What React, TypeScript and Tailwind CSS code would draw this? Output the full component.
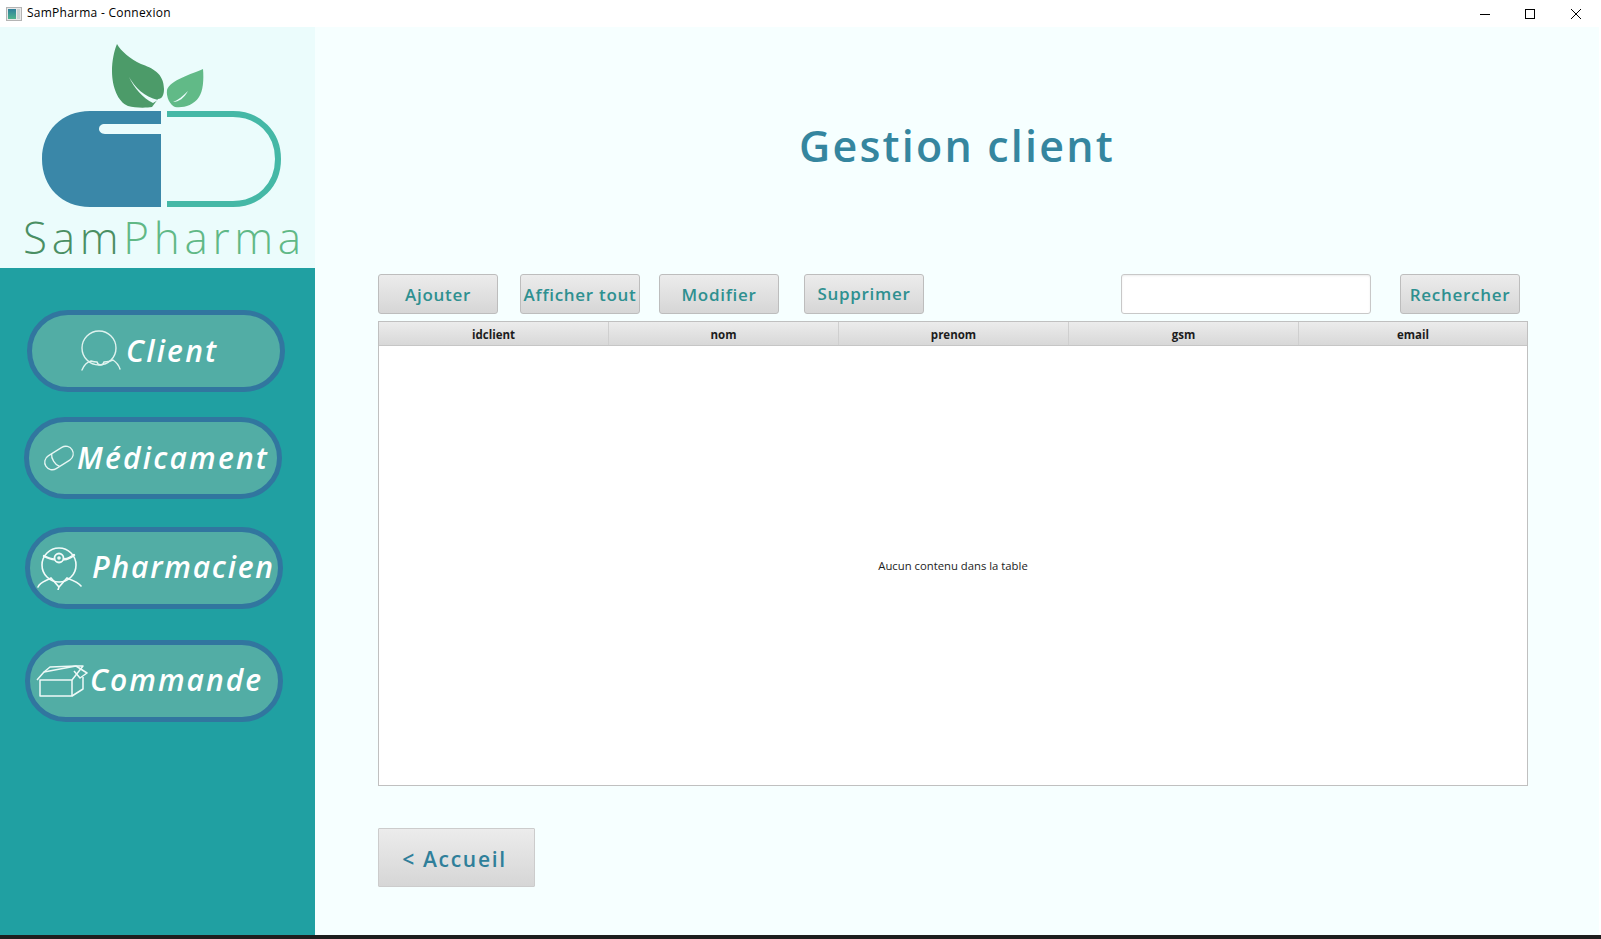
import type { ReactNode } from "react";

const FONT = "font-['Open_Sans','Liberation_Sans',sans-serif]";

function LogoMark() {
  return (
    <svg viewBox="0 0 315 186" className="block w-[315px] h-[186px]">
      <path d="M117 17 C121 24 130 32 141 37 C152 41 164 46 164 62 C164 68 162 72 158 72 L152 80 C146 81 135 81 128 79 C118 75 112 60 112 44 C112 34 114 24 117 17 Z" fill="#4c9b69" />
      <path d="M129 50 C135 60 144 70 158 73 L153 76 C143 71 134 61 129 50 Z" fill="#ebfcfc" />
      <path d="M203 42 C204 53 203 64 199 70 C193 79 183 81 175 80 C170 78 166 70 167 63 C170 53 192 47 203 42 Z" fill="#61ba87" />
      <path d="M188 64 C183 69 178 73 173 75 C179 75 184 71 188 64 Z" fill="#ebfcfc" />
      <path d="M161 84 L90 84 C62 84 42 104 42 132 C42 160 62 180 90 180 L161 180 L161 107 L105 107 C101 107 99 104 99 102 C99 99 101 97 105 97 L161 97 Z" fill="#3a87a8" />
      <path d="M167 87 L233 87 C259 87 278 106 278 132 C278 158 259 177 233 177 L167 177" fill="none" stroke="#45b8a6" strokeWidth="6" />
    </svg>
  );
}

function ClientIcon() {
  return (
    <svg viewBox="0 0 40 44" className="w-[40px] h-[44px] shrink-0" fill="none" stroke="#dff3ef" strokeWidth="1.4" strokeLinecap="round">
      <circle cx="18" cy="19" r="17" />
      <path d="M1 41 C3 36 6 33 10 32 C13 33 15 33 16 33 C17 37 22 37 23 33 C25 33 28 33 32 31 C35 33 38 37 39 40" />
    </svg>
  );
}

function PillIcon() {
  return (
    <svg viewBox="0 0 32 26" className="w-[32px] h-[26px] shrink-0" fill="none" stroke="#e6f6f3" strokeWidth="1.3">
      <g transform="rotate(-32 16 13)">
        <rect x="0.5" y="5.5" width="31" height="15" rx="7.5" />
        <path d="M12 5.5 C9 9 9 17 12 20.5" />
      </g>
    </svg>
  );
}

function PharmacienIcon() {
  return (
    <svg viewBox="0 0 45 44" className="w-[45px] h-[44px] shrink-0" fill="none" stroke="#f2fbf9" strokeWidth="1.6" strokeLinecap="round">
      <circle cx="22" cy="19" r="17" />
      <path d="M7 10 C13 13 17 14 19 13 M26 13 C29 14 33 12 37 9" strokeWidth="2.4" />
      <circle cx="22" cy="12" r="4.5" fill="#52ada5" strokeWidth="1.8" />
      <circle cx="22" cy="12" r="1" />
      <path d="M1 41 C3 36 9 35 14 32 L22 41 L30 32 C35 34 41 36 44 40 M22 41 L21 44" />
    </svg>
  );
}

function BoxIcon() {
  return (
    <svg viewBox="0 0 52 32" className="w-[52px] h-[32px] shrink-0" fill="none" stroke="#eef9f7" strokeWidth="1.5" strokeLinejoin="round">
      <path d="M4 15 L36 15 L36 31 L4 31 Z" />
      <path d="M36 31 L47 24 L47 12" />
      <path d="M1 15 L8 7 L40 1 L47 1 L36 15" />
      <path d="M8 7 L14 2 L40 1" />
      <path d="M40 1 L51 8 L44 13 L38 6" />
    </svg>
  );
}

const PILLS: { label: string; icon: ReactNode; cls: string; textCls: string }[] = [
  { label: "Client", icon: <ClientIcon />, cls: "ml-[27px] mt-[42px] pl-[49px] gap-[5px]", textCls: "-mt-[2px] tracking-[2.2px]" },
  { label: "Médicament", icon: <PillIcon />, cls: "ml-[24px] mt-[25px] pl-[14px] gap-[2px]", textCls: "-mt-[2px] tracking-[2.2px]" },
  { label: "Pharmacien", icon: <PharmacienIcon />, cls: "ml-[25px] mt-[28px] pl-[7px] gap-[10px]", textCls: "-mt-[3px] tracking-[1.8px]" },
  { label: "Commande", icon: <BoxIcon />, cls: "ml-[25px] mt-[31px] pl-[6px] gap-[2px]", textCls: "-mt-[3px] tracking-[2px]" },
];

const COLUMNS = ["idclient", "nom", "prenom", "gsm", "email"];

const BTN = "h-[40px] w-[120px] shrink-0 rounded-[3px] border border-[#bdbdbd] bg-gradient-to-b from-[#ececec] to-[#d6d6d6] pt-[1px] text-[17px] font-semibold tracking-[0.7px] text-[#2e9090] flex items-center justify-center";

export default function App() {
  return (
    <div className={`h-[939px] w-[1601px] overflow-hidden flex flex-col bg-white ${FONT}`}>
      {/* title bar */}
      <div className="h-[27px] shrink-0 flex items-center bg-white">
        <div className="ml-[6px] w-[16px] h-[14px] border border-[#b4b4b4] bg-[#e8e8e8] flex p-[1px] gap-[1px]">
          <div className="w-[8px] bg-gradient-to-b from-[#2f7f9a] to-[#4fb48c]" />
          <div className="flex-1 bg-[#c9d2d2]" />
        </div>
        <span className="ml-[5px] -mt-[1px] text-[12px] text-black tracking-[0.25px]">SamPharma - Connexion</span>
        <div className="ml-auto flex items-center mr-[20px]">
          <svg viewBox="0 0 10 10" className="w-[10px] h-[10px]" stroke="black" strokeWidth="1"><path d="M0 5.5 H10" /></svg>
          <svg viewBox="0 0 10 10" className="w-[10px] h-[10px] ml-[35px]" fill="none" stroke="black" strokeWidth="1"><rect x="0.5" y="0.5" width="9" height="9" /></svg>
          <svg viewBox="0 0 10 10" className="w-[10px] h-[10px] ml-[36px]" stroke="black" strokeWidth="1"><path d="M0 0 L10 10 M10 0 L0 10" /></svg>
        </div>
      </div>

      <div className="flex-1 flex min-h-0">
        {/* sidebar */}
        <div className="w-[315px] shrink-0 flex flex-col bg-[#20a0a2]">
          <div className="h-[241px] shrink-0 bg-[#ebfcfc] flex flex-col">
            <LogoMark />
            <div className="pl-[23px] -mt-[1px] text-[44px] leading-[50px] font-light tracking-[4.7px] whitespace-nowrap">
              <span className="text-[#4a8f63]">Sam</span><span className="text-[#60b886]">Pharma</span>
            </div>
          </div>
          {PILLS.map(p => (
            <div key={p.label} className={`w-[258px] h-[82px] shrink-0 rounded-[41px] border-[5px] border-[#31769f] bg-[#52ada5] flex items-center ${p.cls}`}>
              {p.icon}
              <span className={`text-[30px] italic font-semibold text-white whitespace-nowrap ${p.textCls}`}>{p.label}</span>
            </div>
          ))}
        </div>

        {/* main */}
        <div className="flex-1 min-w-0 bg-[#f6ffff] flex flex-col">
          <div className="h-[240px] shrink-0 flex items-center justify-center">
            <h1 className="-mt-[1px] text-[43px] font-semibold tracking-[2.2px] text-[#35869f]">Gestion client</h1>
          </div>
          <div className="pl-[63px] pr-[71px] flex-1 flex flex-col">
            <div className="mt-[7px] flex items-center">
              <button className={BTN}>Ajouter</button>
              <button className={`${BTN} ml-[22px]`}>Afficher tout</button>
              <button className={`${BTN} ml-[19px]`}>Modifier</button>
              <button className={`${BTN} ml-[25px]`}><span className="-mt-[2px]">Supprimer</span></button>
              <input className="ml-[197px] h-[40px] w-[250px] rounded-[3px] border border-[#c8c8c8] bg-white shadow-[inset_0_1px_2px_rgba(0,0,0,0.08)]" />
              <button className={`${BTN} ml-[29px]`}>Rechercher</button>
            </div>
            <div className="mt-[7px] h-[465px] border border-[#c0c0c0] bg-white flex flex-col">
              <div className="h-[24px] shrink-0 grid grid-cols-[230px_230px_230px_230px_1fr] border-b border-[#c6c6c6] bg-gradient-to-b from-[#ececec] to-[#d8d8d8]">
                {COLUMNS.map(c => (
                  <div key={c} className="flex items-center justify-center border-r border-[#cfcfcf] last:border-r-0 pt-[2px] text-[11.5px] font-bold text-[#1c1c1c]">{c}</div>
                ))}
              </div>
              <div className="flex-1 flex items-center justify-center pt-[1px] text-[11.3px] text-[#1c1c1c]">Aucun contenu dans la table</div>
            </div>
            <button className="mt-[42px] h-[59px] w-[157px] rounded-[1px] border border-[#cccccc] bg-gradient-to-b from-[#ececec] to-[#d6d6d6] pt-[4px] pr-[4px] text-[21px] font-semibold tracking-[1.7px] text-[#2f7f9a]">&lt; Accueil</button>
          </div>
        </div>
        <div className="w-[2px] shrink-0 bg-white" />
      </div>
      <div className="h-[4px] shrink-0 bg-[#1e1e1e]" />
    </div>
  );
}
